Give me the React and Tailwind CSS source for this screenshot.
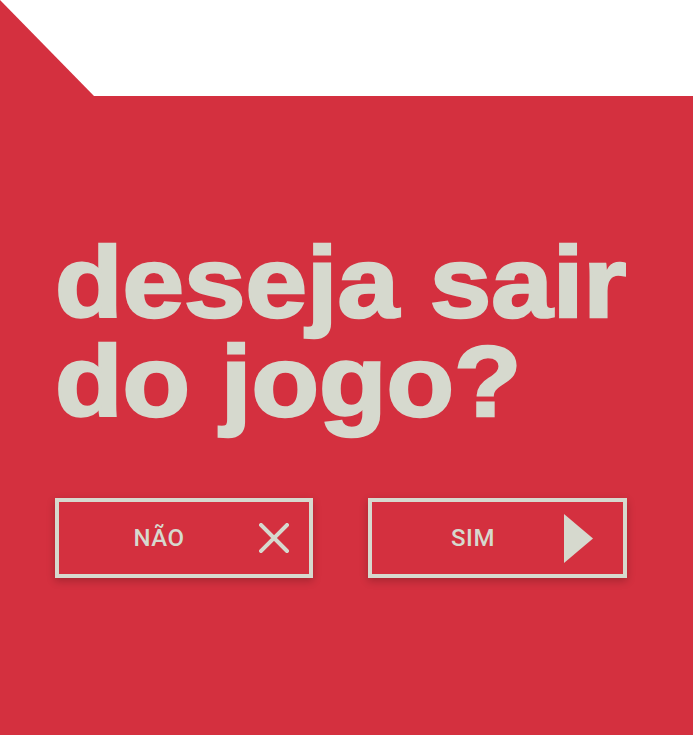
export default function App() {
  const red = "bg-[#d4303f]";
  return (
    <div className="w-[693px] h-[735px] flex flex-col bg-white overflow-hidden">
      <div className="h-[96px] w-full shrink-0">
        <svg width="94" height="96" viewBox="0 0 94 96" className="block">
          <polygon points="0,0 94,96 0,96" fill="#d4303f" />
        </svg>
      </div>
      <div className={`flex-1 ${red} pl-[55px] pt-[137px] flex flex-col`}>
        <h1 className="text-[100px] leading-[99px] font-bold text-[#d6d9ce] font-['Liberation_Sans',Arial,sans-serif] tracking-[0px] origin-left scale-x-[1.105] [-webkit-text-stroke:2.5px_#d6d9ce]">
          deseja sair
          <br />
          do jogo?
        </h1>
        <div className="flex gap-[55px] mt-[67px] font-['Roboto',sans-serif]">
          <button className="w-[258px] h-[80px] border-[4px] border-[#d6d9ce] flex items-center shadow-[0_3px_8px_rgba(0,0,0,0.22)]">
            <span className="w-[200px] text-center text-[24px] font-medium tracking-[0.5px] text-[#d6d9ce]">NÃO</span>
            <svg width="30" height="30" viewBox="0 0 30 30" className="block">
              <path d="M2 2 L28 28 M28 2 L2 28" stroke="#d6d9ce" strokeWidth="4" strokeLinecap="square" />
            </svg>
          </button>
          <button className="w-[259px] h-[80px] border-[4px] border-[#d6d9ce] flex items-center shadow-[0_3px_8px_rgba(0,0,0,0.22)]">
            <span className="w-[202px] text-center text-[24px] font-medium tracking-[0.5px] text-[#d6d9ce]">SIM</span>
            <svg width="29" height="49" viewBox="0 0 29 49" className="block -ml-[10px]">
              <polygon points="0,0 29,24.5 0,49" fill="#d6d9ce" />
            </svg>
          </button>
        </div>
      </div>
    </div>
  );
}
